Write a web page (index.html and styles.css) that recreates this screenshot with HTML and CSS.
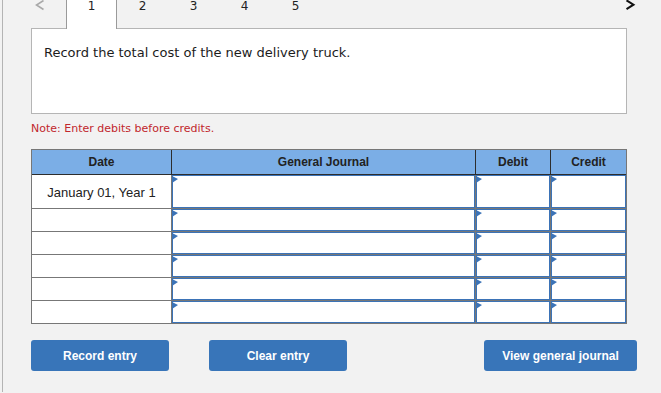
FILE: index.html
```html
<!DOCTYPE html>
<html>
<head>
<meta charset="utf-8">
<link rel="stylesheet" href="styles.css">
</head>
<body>
<div class="page">
  <div class="tabbar">
    <span class="nav prev"><svg width="10" height="11" viewBox="0 0 10 11"><polyline points="8.5,0.5 1.5,5 8.5,9.5" fill="none" stroke="#a9a9a9" stroke-width="1.6"/></svg></span>
    <div class="tab active">1</div>
    <div class="tab">2</div>
    <div class="tab">3</div>
    <div class="tab">4</div>
    <div class="tab">5</div>
    <span class="nav next"><svg width="12" height="11" viewBox="0 0 12 11"><polyline points="1.5,0.3 8.5,4.7 1.5,9.2" fill="none" stroke="#111" stroke-width="2"/></svg></span>
  </div>
  <div class="question">Record the total cost of the new delivery truck.</div>
  <p class="note">Note: Enter debits before credits.</p>
  <div class="journal">
    <div class="jrow head">
      <div class="hcell">Date</div>
      <div class="hcell">General Journal</div>
      <div class="hcell">Debit</div>
      <div class="hcell">Credit</div>
    </div>
    <div class="jrow body first">
      <div class="dcell">January 01, Year 1</div>
      <div class="icell"><div class="inp"></div></div>
      <div class="icell"><div class="inp"></div></div>
      <div class="icell"><div class="inp"></div></div>
    </div>
    <div class="jrow body">
      <div class="dcell"></div>
      <div class="icell"><div class="inp"></div></div>
      <div class="icell"><div class="inp"></div></div>
      <div class="icell"><div class="inp"></div></div>
    </div>
    <div class="jrow body">
      <div class="dcell"></div>
      <div class="icell"><div class="inp"></div></div>
      <div class="icell"><div class="inp"></div></div>
      <div class="icell"><div class="inp"></div></div>
    </div>
    <div class="jrow body">
      <div class="dcell"></div>
      <div class="icell"><div class="inp"></div></div>
      <div class="icell"><div class="inp"></div></div>
      <div class="icell"><div class="inp"></div></div>
    </div>
    <div class="jrow body">
      <div class="dcell"></div>
      <div class="icell"><div class="inp"></div></div>
      <div class="icell"><div class="inp"></div></div>
      <div class="icell"><div class="inp"></div></div>
    </div>
    <div class="jrow body last">
      <div class="dcell"></div>
      <div class="icell"><div class="inp"></div></div>
      <div class="icell"><div class="inp"></div></div>
      <div class="icell"><div class="inp"></div></div>
    </div>
  </div>
  <div class="actions">
    <button class="btn">Record entry</button>
    <button class="btn">Clear entry</button>
    <button class="btn wide">View general journal</button>
  </div>
</div>
</body>
</html>
```
FILE: styles.css
```css
html, body {
  margin: 0;
  padding: 0;
  background: #f2f2f2;
  overflow: hidden;
}
.page {
  margin-left: 2px;
  border-left: 1px solid #b4b4b4;
  height: 393px;
  padding-left: 28px;
  box-sizing: border-box;
  font-family: "DejaVu Sans", sans-serif;
  color: #222;
}
.tabbar {
  display: flex;
  align-items: flex-start;
  margin-top: -1px;
  height: 29px;
  width: 606px;
  position: relative;
  z-index: 1;
}
.nav {
  display: flex;
  padding-top: 1px;
}
.prev {
  width: 35px;
  padding-left: 4px;
  box-sizing: border-box;
}
.next {
  margin-left: auto;
}
.tab {
  width: 51px;
  text-align: center;
  font-size: 12px;
  line-height: 14px;
  color: #222;
}
.tab.active {
  width: 51px;
  box-sizing: border-box;
  height: 30px;
  background: #fff;
  border-left: 1px solid #9a9a9a;
  border-right: 1px solid #9a9a9a;
}
.question {
  width: 596px;
  height: 86px;
  box-sizing: border-box;
  background: #fff;
  border: 1px solid #b5b5b5;
  padding: 16px 12px 0;
  font-size: 13px;
  line-height: 15px;
  color: #1c1c1c;
}
.note {
  margin: 8px 0 14px;
  font-size: 11px;
  line-height: 13px;
  color: #c1272d;
}
.journal {
  width: 596px;
  box-sizing: border-box;
  border: 1px solid #777;
  font-family: "Liberation Sans", Arial, sans-serif;
}
.jrow {
  display: grid;
  grid-template-columns: 139px 303px 74px 75px;
  column-gap: 1px;
}
.head {
  background: #2d2d2d;
  border-bottom: 1px solid #2d2d2d;
}
.hcell {
  background: #7baee6;
  height: 24px;
  line-height: 24px;
  text-align: center;
  font-weight: bold;
  font-size: 12px;
  color: #222;
}
.body {
  background: #777;
  border-bottom: 1px solid #777;
  height: 22px;
}
.body.first {
  height: 33px;
}
.body.last {
  border-bottom: 0;
}
.dcell {
  background: #fff;
  text-align: center;
  font-size: 13px;
  line-height: 31px;
  padding-top: 2px;
  overflow: hidden;
  color: #222;
}
.body:not(.first) .dcell {
  padding-top: 0;
  line-height: 22px;
}
.icell {
  background: #fff;
  display: flex;
}
.inp {
  flex: 1;
  border: 1px solid #3b73b7;
  position: relative;
}
.inp::before {
  content: "";
  position: absolute;
  left: -1px;
  top: 0;
  border-left: 6px solid #3b73b7;
  border-top: 3px solid transparent;
  border-bottom: 4px solid transparent;
}
.actions {
  display: flex;
  gap: 40px;
  width: 606px;
  margin-top: 16px;
}
.btn {
  width: 138px;
  height: 31px;
  background: #3875b9;
  color: #fff;
  border: 0;
  border-radius: 3px;
  font-family: "Liberation Sans", Arial, sans-serif;
  font-weight: bold;
  font-size: 12px;
  padding: 0;
}
.btn.wide {
  width: 153px;
  margin-left: auto;
}
```
